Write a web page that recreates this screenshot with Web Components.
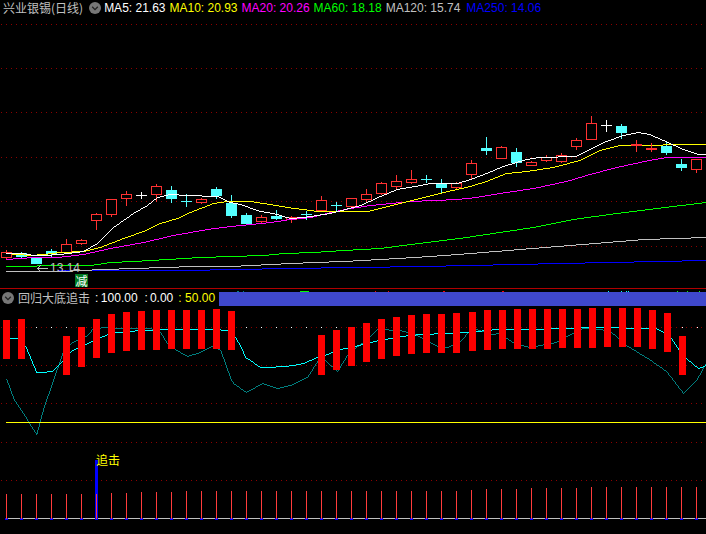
<!DOCTYPE html>
<html lang="zh">
<head>
<meta charset="utf-8">
<title>兴业银锡</title>
<style>
html,body{margin:0;padding:0;background:#000;height:100%;overflow:hidden}
</style>
</head>
<body>
<stock-screen>
  <kline-pane>
    <chart-label style="left:36px;top:261px;" slot="labels">
      <svg width="12" height="9" viewBox="0 0 12 9" style="margin-right:2px;vertical-align:-1px"><path d="M1.5 4.5H11.5M1.5 4.5L5 1M1.5 4.5L5 8" fill="none" stroke="#c0c0c0" shape-rendering="crispEdges"/></svg>13.14
    </chart-label>
    <chart-badge style="left:75px;top:274px;" slot="labels">减</chart-badge>
  </kline-pane>
  <indicator-pane></indicator-pane>
</stock-screen>

<script>
const SANS = '"Liberation Sans","Noto Sans CJK SC",sans-serif';
const CJK = '"Noto Sans CJK SC","Liberation Sans",sans-serif';
/* pixel-stepped line: one column at a time, so it has the aliased staircase of the terminal's drawing */
const poly = (a, c) => {
  let d = '', prev = null;
  for (let i = 0; i < a.length - 1; i++) {
    const [x0, y0] = a[i], [x1, y1] = a[i + 1];
    for (let x = x0; x < x1; x++) {
      const y = Math.round(y0 + (y1 - y0) * (x - x0) / (x1 - x0));
      const p = prev === null ? y : prev;
      const top = y < p ? y : y > p ? p + 1 : y;
      const bot = y < p ? p - 1 : y;
      d += `M${x} ${top}h1V${bot + 1}h-1z`;
      prev = y;
    }
  }
  return `<path d="${d}" fill="${c}"/>`;
};
const grid = (ys, c, x0 = 0) => ys.map(y => `<line x1="${x0 + .5}" x2="706" y1="${y + .5}" y2="${y + .5}" stroke="${c}" stroke-dasharray="1 4"/>`).join('');
const CHEVRON = `<svg width="12" height="12" viewBox="0 0 12 12" style="display:block"><circle cx="6" cy="6" r="6" fill="#777"/><path d="M3.2 4.8L6 7.6L8.8 4.8" fill="none" stroke="#222" stroke-width="1.3"/></svg>`;

class ChartLabel extends HTMLElement {
  constructor() {
    super();
    this.attachShadow({mode: 'open'}).innerHTML = `<style>
      :host{display:block;position:absolute;font:12px/14px ${SANS};color:#c0c0c0;white-space:nowrap}
    </style><slot></slot>`;
  }
}
class ChartBadge extends HTMLElement {
  constructor() {
    super();
    this.attachShadow({mode: 'open'}).innerHTML = `<style>
      :host{display:flex;position:absolute;width:13px;height:13px;align-items:center;justify-content:center;
      background:#007a20;color:#fff;font:12px/12px ${CJK}}
    </style><slot></slot>`;
  }
}
class MaItem extends HTMLElement {
  constructor() {
    super();
    this.attachShadow({mode: 'open'}).innerHTML = `<style>
      :host{display:block;font:12px/14px ${SANS};white-space:nowrap}
    </style><slot></slot>`;
  }
}
class PaneHead extends HTMLElement {
  constructor() {
    super();
    this.attachShadow({mode: 'open'}).innerHTML = `<style>
      :host{display:flex;align-items:center;height:16px;grid-area:1/1;align-self:start;z-index:1;color:#c0c0c0;
        font:12px/14px ${SANS};white-space:nowrap}
    </style><slot></slot>`;
  }
}

class KlinePane extends HTMLElement {
  constructor() {
    super();
    const C = [
      [0,252,257,250,259,'h'],[1,253,256,252,258,'c'],[2,258,263,258,263,'c'],[3,251,253,249,256,'c'],[4,244,252,239,253,'h'],
      [5,240,243,239,244,'h'],[6,214,220,213,229,'h'],[7,199,214,199,216,'h'],[8,194,198,191,205,'h'],[9,195,195,192,198,'w'],
      [10,186,194,184,201,'h'],[11,190,198,186,202,'c'],[12,201,201,194,206,'x'],[13,199,202,198,203,'h'],[14,189,195,187,198,'c'],
      [15,203,215,195,217,'c'],[16,215,223,213,224,'c'],[17,217,221,215,222,'h'],[18,216,218,210,219,'c'],[19,217,219,216,222,'h'],
      [20,214,214,211,219,'x'],[21,200,210,196,210,'h'],[22,205,205,202,211,'x'],[23,198,206,198,206,'h'],[24,194,199,189,201,'h'],
      [25,183,193,182,194,'h'],[26,181,186,175,188,'h'],[27,179,182,170,183,'h'],[28,179,179,175,182,'x'],[29,183,187,179,192,'c'],
      [30,183,187,182,188,'h'],[31,163,174,160,178,'h'],[32,148,150,137,154,'c'],[33,147,158,146,158,'h'],[34,152,162,148,166,'c'],
      [35,162,165,161,165,'h'],[36,157,160,155,161,'h'],[37,155,161,153,162,'h'],[38,140,146,138,149,'h'],[39,123,139,116,139,'h'],
      [40,125,125,120,131,'w'],[41,126,132,124,138,'c'],[42,144,144,140,151,'r'],[43,148,149,143,151,'r'],[44,146,152,142,154,'c'],
      [45,164,167,159,170,'c'],[46,159,169,159,172,'h']
    ];
    const RED = '#ff3232', CY = '#54ffff';
    const draw = list => list.map(([k,t,b,wt,wb,s]) => {
      const x = 6 + 15 * k, col = s === 'h' || s === 'r' ? RED : s === 'w' ? '#fff' : CY;
      let o = `<line x1="${x + .5}" x2="${x + .5}" y1="${wt}" y2="${wb + 1}" stroke="${col}"/>`;
      if (s === 'h') o += `<rect x="${x - 4.5}" y="${t + .5}" width="10" height="${b - t}" fill="#000" stroke="${col}"/>`;
      else if (s === 'c') o += `<rect x="${x - 5}" y="${t}" width="11" height="${b - t + 1}" fill="${col}"/>`;
      else if (s === 'r') o += `<rect x="${x - 5}" y="${t}" width="11" height="2" fill="${col}"/>`;
      else o += `<line x1="${x - 5}" x2="${x + 6}" y1="${t + .5}" y2="${t + .5}" stroke="${col}"/>`;
      return o;
    }).join('');
    const candles = draw(C.filter(c => c[5] !== 'r'));
    const overLines = draw(C.filter(c => c[5] === 'r'));
    const white = [[6,253],[23,253],[33,255],[43,255],[60,254],[83,251],[97,243],[113,227],[133,213],[147,205],[157,197],[170,194],[187,195],[217,196],[230,202],[240,204],[260,211],[273,213],[290,218],[303,217],[330,213],[345,209],[360,205],[380,196],[397,189],[420,185],[430,183],[457,183],[470,179],[486,173],[503,166],[526,159],[539,157],[576,156],[589,149],[606,141],[623,135],[638,132],[649,134],[663,140],[683,149],[698,154],[706,154]];
    const yellow = [[6,253],[30,255],[43,254],[60,252],[83,251],[100,247],[123,238],[143,231],[160,223],[177,218],[190,212],[213,203],[227,201],[250,201],[270,204],[287,207],[303,209],[317,211],[368,211],[387,206],[407,201],[427,196],[447,191],[466,187],[486,181],[506,173],[526,171],[553,167],[579,160],[599,150],[619,145],[706,144]];
    const magenta = [[6,259],[33,257],[57,257],[83,254],[110,248],[143,242],[173,235],[207,229],[230,226],[250,224],[270,222],[290,219],[310,217],[330,212],[350,208],[370,205],[390,203],[410,201],[433,200],[457,199],[476,197],[499,193],[533,188],[566,181],[586,175],[616,167],[649,160],[666,157],[706,157]];
    const green = [[6,266],[30,266],[43,265],[90,265],[110,262],[133,261],[167,259],[200,257],[230,256],[263,255],[283,253],[313,252],[343,250],[380,248],[410,244],[443,240],[466,237],[499,232],[533,227],[573,219],[616,213],[656,208],[706,202]];
    const gray = [[6,271],[58,271],[103,269],[133,268],[163,267],[193,266],[230,266],[270,264],[313,262],[343,261],[380,259],[430,256],[470,253],[644,239],[706,237]];
    const blue = [[58,270],[178,270],[240,269],[283,268],[358,267],[420,266],[470,265],[560,263],[706,260]];
    const s = this.attachShadow({mode: 'open'});
    s.innerHTML = `<style>
      :host{display:grid;position:relative;height:288px;overflow:hidden}
      svg.c{grid-area:1/1;width:706px;height:288px;display:block}
      .t{font-family:${CJK};margin-left:3px;color:#c0c0c0}
      .ic{margin:0 3px 0 6px;flex:none}
      .ma{display:flex;gap:4px}
    </style>
    <svg class="c" viewBox="0 0 706 288" shape-rendering="crispEdges">
      ${grid([24,68,112,157,201,246], '#8c0000')}
      ${candles}
      ${poly(blue,'#0000ff')}${poly(gray,'#c0c0c0')}${poly(green,'#00ff00')}${poly(magenta,'#ff00ff')}${poly(yellow,'#ffff00')}${poly(white,'#ffffff')}
      ${overLines}
    </svg>
    <pane-head>
      <span class="t">兴业银锡(日线)</span><span class="ic">${CHEVRON}</span>
      <span class="ma">
        <ma-item style="color:#fff">MA5: 21.63</ma-item>
        <ma-item style="color:#ff0">MA10: 20.93</ma-item>
        <ma-item style="color:#f0f">MA20: 20.26</ma-item>
        <ma-item style="color:#0f0">MA60: 18.18</ma-item>
        <ma-item style="color:#c0c0c0">MA120: 15.74</ma-item>
        <ma-item style="color:#00f;margin-left:2px">MA250: 14.06</ma-item>
      </span>
    </pane-head>
    <slot name="labels"></slot>`;
  }
}

class IndicatorPane extends HTMLElement {
  constructor() {
    super();
    const B = {0:[320,359],1:[319,359],4:[336,375],5:[327,367],6:[319,358],7:[314,353],8:[312,351],9:[311,350],10:[310,350],11:[310,349],12:[310,349],13:[310,349],14:[309,349],15:[311,350],
      21:[335,375],22:[330,370],23:[327,366],24:[323,362],25:[319,359],26:[317,356],27:[315,354],28:[314,353],29:[314,353],30:[313,353],31:[312,351],32:[310,350],33:[310,349],34:[309,349],35:[309,349],36:[309,349],37:[309,348],38:[309,348],39:[308,348],40:[308,347],41:[308,347],42:[308,347],43:[310,349],44:[313,352],45:[336,375]};
    const bars = Object.entries(B).map(([k,[t,b]]) => `<rect x="${k > 30 ? 4 + 15 * k : 3 + 15 * k}" y="${t}" width="7" height="${b - t}" fill="#ff0000"/>`).join('');
    const dots = [36,51,66,246,261,276,291,306,321,336,682,697].map(x => `<rect x="${x}" y="327" width="1" height="1" fill="#fff"/>`).join('');
    const cyan = [[6,338],[17,338],[25,346],[28,353],[36,372],[40,372],[52,371],[63,360],[72,350],[83,345],[93,340],[108,334],[115,332],[123,332],[138,330],[153,330],[163,329],[213,329],[228,330],[235,337],[240,346],[245,357],[250,360],[260,367],[268,367],[283,366],[293,365],[303,363],[317,357],[327,354],[340,349],[355,346],[370,342],[378,340],[390,338],[400,336],[420,334],[447,333],[457,332],[466,332],[496,329],[539,329],[586,327],[656,328],[663,332],[671,338],[679,350],[686,358],[698,368],[706,365]];
    const teal = [[6,379],[13,398],[23,413],[29,423],[36,434],[43,408],[52,382],[62,353],[72,342],[77,340],[87,335],[93,328],[108,327],[120,328],[150,328],[160,332],[168,345],[187,356],[200,352],[213,345],[220,350],[230,378],[233,383],[246,392],[262,383],[277,388],[290,385],[307,377],[317,361],[325,360],[337,371],[348,353],[363,342],[377,329],[400,330],[417,335],[427,341],[438,346],[447,347],[460,341],[468,332],[476,329],[491,334],[499,333],[514,343],[529,347],[556,342],[574,332],[583,328],[609,330],[626,345],[649,359],[666,371],[683,393],[696,380],[706,362]];
    const marks = [[237,2,'#008080'],[243,1,'#008080'],[300,9,'#00ff00'],[375,1,'#f00'],[388,1,'#f00'],[443,2,'#f00'],[502,2,'#f00'],[608,1,'#0ff'],[621,1,'#0ff'],[626,1,'#0ff'],[628,1,'#0ff'],[677,1,'#0f0'],[687,1,'#0f0'],[699,1,'#0f0']]
      .map(([x,w,c]) => `<rect x="${x}" y="291" width="${w}" height="1" fill="${c}"/>`).join('');
    const tops = k => k <= 6 ? 494 : k <= 8 ? 493 : k <= 11 ? 492 : k <= 30 ? 491 : k === 31 ? 490 : k <= 34 ? 489 : k <= 38 ? 488 : 487;
    let sticks = '';
    for (let k = 0; k <= 46; k++) {
      const x = 6 + 15 * k;
      sticks += `<rect x="${x - 1}" y="518" width="3" height="2" fill="#0000ff"/><rect x="${x}" y="${tops(k)}" width="1" height="${519 - tops(k)}" fill="#ff3c3c"/>`;
    }
    const s = this.attachShadow({mode: 'open'});
    s.innerHTML = `<style>
      :host{display:grid;position:relative;height:245px;overflow:hidden}
      svg.c{grid-area:1/1;width:706px;height:245px;display:block}
      pane-head{height:17px}
      .ic{margin:1px 4px 0 2px;flex:none}
      .t{font-family:${CJK}}
      .v{color:#fff}
      .blue{flex:1;height:14px;align-self:flex-end;background:#3f48cc;margin-left:4px}
    </style>
    <svg class="c" viewBox="0 289 706 245" shape-rendering="crispEdges">
      ${grid([327,365,403,442,480], '#8c0000')}
      ${marks}
      ${poly(teal,'#008080')}${poly(cyan,'#00ffff')}
      <rect x="6" y="422" width="700" height="1" fill="#ffff00"/>
      ${dots}${bars}
      <rect x="95" y="460" width="3" height="59" fill="#0000ff"/>
      <rect x="7" y="518" width="699" height="1" fill="#c0c0c0"/>
      ${sticks}
    </svg>
    <pane-head>
      <span class="ic">${CHEVRON}</span>
      <span class="t">回归大底追击</span>
      <span class="v" style="margin-left:5px">:<span style="margin-left:2.5px">100.00</span></span>
      <span class="v" style="margin-left:7px">:<span style="margin-left:2px">0.00</span></span>
      <span class="v" style="margin-left:5px;color:#ff0">:<span style="margin-left:3.5px">50.00</span></span>
      <span class="blue"></span>
    </pane-head>
    <chart-label style="left:96px;top:165px;color:#ff0;font-family:${CJK}">追击</chart-label>`;
  }
}

class StockScreen extends HTMLElement {
  constructor() {
    super();
    this.attachShadow({mode: 'open'}).innerHTML = `<style>
      :host{display:grid;grid-template-rows:288px 1px 245px;width:706px;height:534px;background:#000;overflow:hidden}
      .rule{background:#b00000}
    </style><slot name="a"></slot><div class="rule"></div><slot name="b"></slot>`;
  }
  connectedCallback() {
    this.querySelector('kline-pane').slot = 'a';
    this.querySelector('indicator-pane').slot = 'b';
  }
}
customElements.define('chart-label', ChartLabel);
customElements.define('chart-badge', ChartBadge);
customElements.define('ma-item', MaItem);
customElements.define('pane-head', PaneHead);
customElements.define('kline-pane', KlinePane);
customElements.define('indicator-pane', IndicatorPane);
customElements.define('stock-screen', StockScreen);
</script>
</body>
</html>
